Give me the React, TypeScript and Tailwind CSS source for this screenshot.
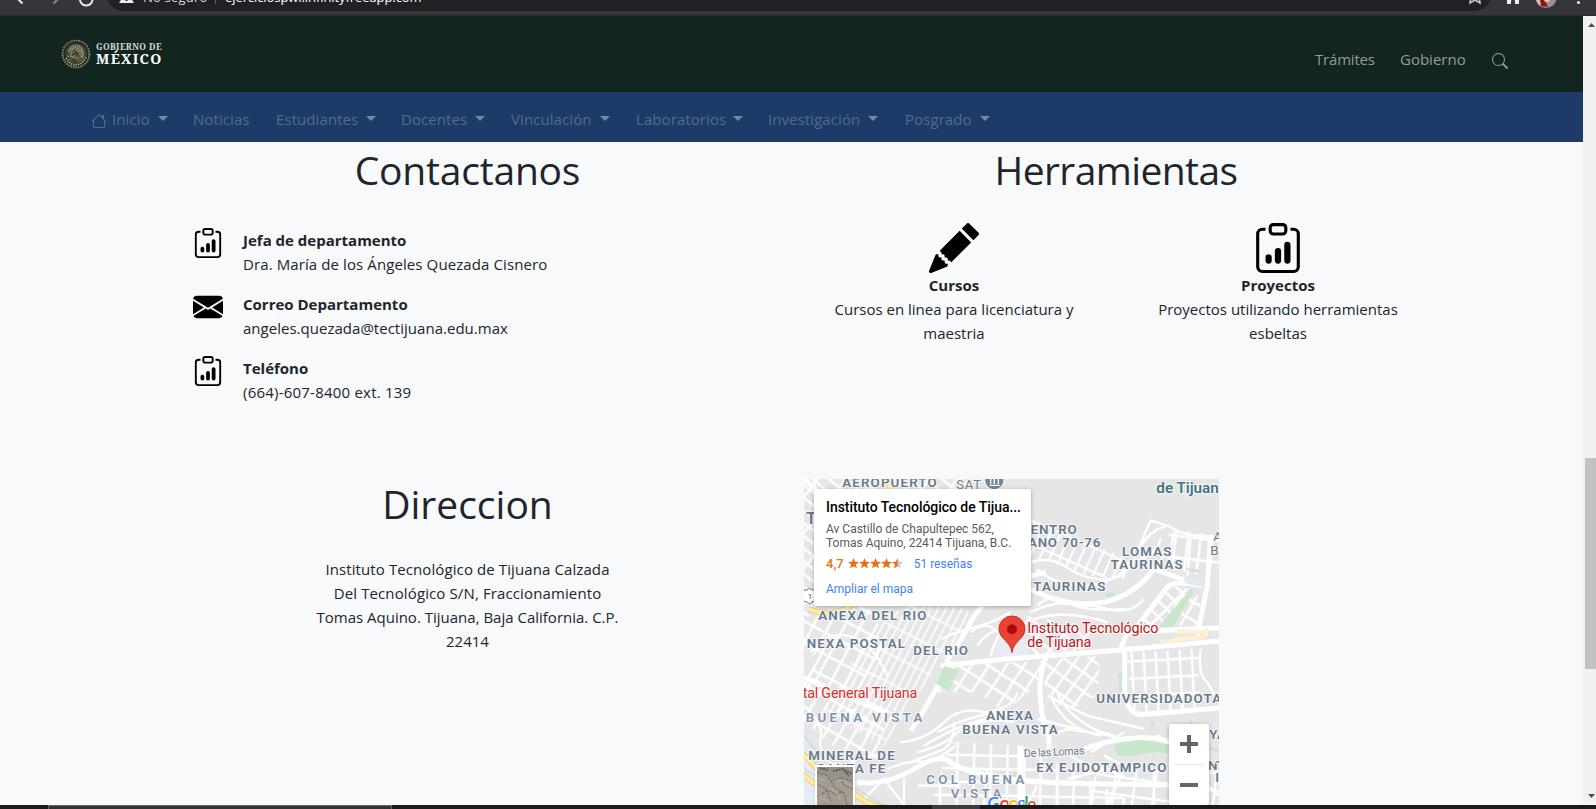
import React from "react";
import { BsClipboardData, BsEnvelopeFill, BsHouse, BsPencilFill, BsSearch } from "react-icons/bs";

function BrowserBar() {
  return (
    <div className="h-4 shrink-0 overflow-hidden border-b border-[#29292c] bg-[#35363a]">
      <div className="-mt-4 flex h-[27px] w-full items-stretch">
        <svg className="h-full w-[107px] shrink-0" viewBox="0 0 107 27" fill="none" strokeWidth="2">
          <path d="M16 13l6.500 6.500" stroke="#e8eaed" />
          <path d="M60 13l-6.500 6.500" stroke="#85868a" />
          <path d="M80.500 13a6.200 6.200 0 1 0 11.500 0" stroke="#e8eaed" />
        </svg>
        <div className="flex w-[1384px] shrink-0 rounded-b-[16px] bg-[#202124] text-[13px] leading-[16px]">
          <svg className="ml-3 h-full w-4 shrink-0" viewBox="0 0 16 27">
            <path d="M7.500 7L15 19H0Z" fill="#e8eaed" />
            <path d="M6.500 15.500h2v1.500h-2z" fill="#202124" />
          </svg>
          <span className="ml-[8px] w-[72px] shrink-0 pt-[5px] font-['Open_Sans',sans-serif] tracking-[0.2px] text-[#d5d8dc]">No seguro</span>
          <span className="mt-[14px] h-[6px] w-px bg-[#5f6368]" />
          <span className="ml-[9px] w-[1216px] shrink-0 pt-[5px] font-['Open_Sans',sans-serif] tracking-[-0.08px] text-white">ejerciciospwi.infinityfreeapp.com</span>
          <svg className="ml-[26px] h-full w-4 shrink-0" viewBox="0 0 16 27" fill="none" stroke="#c4c7ca" strokeWidth="1.600">
            <path d="M4 13l-1 6l5-3l5 3l-1-6" />
          </svg>
        </div>
        <svg className="h-full w-[105px] shrink-0" viewBox="0 0 105 27">
          <path d="M16 11h12v9h-4v-2.500a2 2 0 0 0-4 0V20h-4z" fill="#f1f3f4" />
          <circle cx="55" cy="13.500" r="10.500" fill="#9c8d98" />
          <path d="M45 16l4-1l3 7l-4-1z" fill="#d9b9a8" />
          <path d="M49 15l5 1l3 7l-7-1z" fill="#8f1420" />
          <path d="M51 12h9l-2 6h-4z" fill="#e6c09c" />
          <circle cx="87.500" cy="18.500" r="1.600" fill="#e8eaed" />
        </svg>
      </div>
    </div>
  );
}

function Seal() {
  return (
    <svg className="size-[30px]" viewBox="0 0 30 30" fill="none">
      <circle cx="15" cy="15" r="13.400" stroke="#8d8468" strokeWidth="1.900" strokeDasharray="1.600 0.900" />
      <circle cx="15" cy="15" r="11" fill="#3c4435" />
      <path d="M8 9c3-4 9-5 13-1c3 3 3 9 1 12l-4-2l1-4l-5-4l-3 3l-4 1z" fill="#6b6b55" />
      <path d="M7 12l5-5l4 2l6 6M10 15l6-4l5 8M6 17l7 1l6 5M9 21l5-5l7 6M17 6l4 5l1 8M12 9l-3 7l8 4" stroke="#a79d7c" strokeWidth="0.900" strokeDasharray="2 0.800" />
      <path d="M5 19c3 6 7 7 10 7.500M25 18c-2 5-5 7.500-10 8" stroke="#b3a985" strokeWidth="1.500" strokeDasharray="1.500 1" />
    </svg>
  );
}

function TopHeader() {
  return (
    <header className="flex h-[76px] shrink-0 items-start bg-[#13251f] pl-[61px]">
      <div className="flex grow items-center gap-[5px] pt-[23px]">
        <Seal />
        <div className="flex flex-col font-['Noto_Serif','Liberation_Serif',serif] font-bold text-white">
          <span className="text-[8.500px] leading-[9px] tracking-[0.380px] text-[#d8dcda]">GOBIERNO DE</span>
          <span className="text-[14px] leading-[15px] tracking-[1.300px]">MÉXICO</span>
        </div>
      </div>
      <div className="flex pt-[31px] text-[15px] leading-6 text-[#939d98]">
        <a className="w-[85px] tracking-[-0.2px]">Trámites</a>
        <a className="w-[92px]">Gobierno</a>
        <a className="w-[91px] pt-[6px]"><BsSearch className="size-4" /></a>
      </div>
    </header>
  );
}

const links = [
  { label: "Inicio", width: "w-[102px]", gap: "ml-2 tracking-normal", caret: true, home: true },
  { label: "Noticias", width: "w-[83px]", gap: "", caret: false },
  { label: "Estudiantes", width: "w-[125px]", gap: "ml-2", caret: true },
  { label: "Docentes", width: "w-[110px]", gap: "ml-2", caret: true },
  { label: "Vinculación", width: "w-[125px]", gap: "ml-2", caret: true },
  { label: "Laboratorios", width: "w-[132px]", gap: "ml-[7px]", caret: true },
  { label: "Investigación", width: "w-[137px]", gap: "ml-2", caret: true },
  { label: "Posgrado", width: "w-[100px]", gap: "ml-2", caret: true },
];

function NavBar() {
  return (
    <nav className="flex h-[50px] shrink-0 bg-[#1e3a69] pl-[91px] pt-[15px] text-[15px] leading-6 tracking-[0.08px] text-[#536a8f]">
      {links.map((l) => (
        <a key={l.label} className={"flex shrink-0 whitespace-nowrap " + l.width}>
          {l.home && <BsHouse className="mr-[5px] mt-[6px] size-4" />}
          {l.label}
          {l.caret && (
            <span className={"mt-[9px] size-0 border-x-[5px] border-t-[5px] border-x-transparent border-t-[#7488a6] " + l.gap} />
          )}
        </a>
      ))}
    </nav>
  );
}

function Contact({ icon, title, text, tracking }: { icon: React.ReactNode; title: string; text: string; tracking: string }) {
  return (
    <div className="flex h-16">
      <div className="w-[50px] text-[30px] text-black">{icon}</div>
      <div className="flex flex-col">
        <b>{title}</b>
        <span className={tracking}>{text}</span>
      </div>
    </div>
  );
}

function Tool({ icon, title, lines }: { icon: React.ReactNode; title: string; lines: string[] }) {
  return (
    <div className="flex w-1/2 flex-col items-center">
      <div className="text-[50px] text-black">{icon}</div>
      <b>{title}</b>
      {lines.map((t) => (
        <span key={t}>{t}</span>
      ))}
    </div>
  );
}

type Label = { t: string; x: number; y: number; w: number; s?: number; c?: string };
const labels: Label[] = [
  { t: "AEROPUERTO", x: 115, y: 25, w: 283 },
  { t: "ENTRO", x: 680, y: 164, w: 138 },
  { t: "ANO 70-76", x: 672, y: 203, w: 217 },
  { t: "LOMAS", x: 954, y: 230, w: 148 },
  { t: "TAURINAS", x: 920, y: 269, w: 216 },
  { t: "TAURINAS", x: 688, y: 335, w: 216 },
  { t: "ANEXA DEL RIO", x: 43, y: 422, w: 324 },
  { t: "NEXA POSTAL", x: 8, y: 506, w: 295 },
  { t: "DEL RIO", x: 328, y: 527, w: 164 },
  { t: "UNIVERSIDADOTAY", x: 877, y: 671, w: 400 },
  { t: "BUENA VISTA", x: 5, y: 729, w: 350, c: "#8092a8" },
  { t: "ANEXA", x: 547, y: 724, w: 140 },
  { t: "BUENA VISTA", x: 475, y: 764, w: 286 },
  { t: "MINERAL DE", x: 13, y: 842, w: 259 },
  { t: "SANTA FE", x: 38, y: 881, w: 206 },
  { t: "EX EJIDOTAMPICO", x: 697, y: 878, w: 390 },
  { t: "COL BUENA", x: 367, y: 914, w: 294, c: "#8092a8" },
  { t: "VISTA", x: 440, y: 957, w: 152, c: "#8092a8" },
  { t: "YA", x: 1216, y: 779, w: 50 },
  { t: "NT", x: 1212, y: 873, w: 48 },
  { t: "IN", x: 1234, y: 909, w: 48 },
  { t: "T", x: 6, y: 135, w: 26, s: 50 },
];

const districts = [
  { id: "a", w: 30, h: 66, a: -52, s: 7, p: "0,0 520,0 520,60 0,420" },
  { id: "b", w: 21, h: 78, a: 27, s: 5, p: "300,380 470,385 520,420 400,560 240,800 60,700 180,480" },
  { id: "c", w: 42, h: 58, a: 28, s: 7, p: "0,420 190,380 250,480 150,660 10,600 50,520 0,540" },
  { id: "d", w: 44, h: 48, a: 33, s: 7, p: "440,560 720,545 700,620 600,700 520,640 400,640" },
  { id: "e", w: 37, h: 46, a: 36, s: 7, p: "730,540 890,530 880,650 780,700 720,620" },
  { id: "f", w: 36, h: 52, a: -3, s: 7, p: "965,520 1180,510 1190,690 990,705" },
  { id: "g", w: 28, h: 66, a: 24, s: 6, p: "680,120 820,180 980,240 960,300 860,290 680,230" },
  { id: "h", w: 34, h: 110, a: -45, s: 7, p: "1000,440 1090,320 1165,330 1070,450" },
  { id: "i", w: 37, h: 65, a: 7, s: 7, p: "1100,150 1245,170 1245,300 1060,260" },
  { id: "j", w: 50, h: 40, a: 1, s: 7, p: "440,790 650,800 870,910 1000,978 380,978 420,850" },
  { id: "k", w: 38, h: 82, a: 30, s: 7, p: "0,600 240,740 220,840 110,820 0,730" },
  { id: "l", w: 32, h: 54, a: -48, s: 6, p: "660,410 860,440 850,510 670,530" },
  { id: "m", w: 60, h: 52, a: 8, s: 7, p: "880,870 1245,870 1245,978 850,978" },
  { id: "n", w: 42, h: 48, a: 30, s: 7, p: "1110,350 1190,350 1190,440 1110,440" },
];

function MapArt() {
  return (
    <svg className="block h-[326px] w-[415px]" viewBox="0 0 1245 978">
      <defs>
        {districts.map((d) => (
          <pattern key={d.id} id={"st-" + d.id} width={d.w} height={d.h} patternUnits="userSpaceOnUse" patternTransform={`rotate(${d.a})`}>
            <path d={`M${d.w / 2} 0V${d.h}M0 ${d.h / 2}H${d.w}`} stroke="#fff" strokeWidth={d.s} />
          </pattern>
        ))}
      </defs>
      <rect width="1245" height="978" fill="#e6e6e6" />
      {districts.map((d) => (
        <polygon key={d.id} points={d.p} fill={`url(#st-${d.id})`} />
      ))}
      <path d="M555 535l25-62l75-10l20 64z" fill="#e8ecf2" />
      <path d="M0 765l62 90l0 123H0z" fill="#e4ebf3" />
      <g fill="none" stroke="#fff" strokeLinejoin="round">
        <g strokeWidth="7">
          <path d="M680 250q60-20 110 16t120 36q60-8 80-60q20-50 50-118l60 20q40 30 130 28M1000 230q20-70 90-90M1010 240q50-20 60-60M700 270q40 40 120 50t160-60q40-50 70 20" />
          <path d="M680 400q90-50 230-10q70 20 110-30M690 420q100-30 220 10M700 380q40-40 90-10t180 20M500 460q50-40 80 0M410 480q70-30 120-40q60-20 90-40M520 500q20-30 60-50M560 530q10-40 30-70" />
          <path d="M290 790q80-10 130-60t120-30q90-10 100-60M340 820q80-20 120-60q80-50 170-30M360 800q130-80 260-95M400 760q110-60 210-60M250 870q70-30 120-20q50-20 85-50M320 850l100-40q30-20 30-80M760 640q20 60 110 110t200 20M740 650q40 100 150 120M710 760q40 10 80-10l130 20M800 830q40 30 110 40l60 30M790 900l120-30M900 830l100 50" />
          <path d="M20 520q40-60 110-50t120 120M0 620q50-90 60-110M0 680q60 50 50 100t50 80M130 860q50-40 100-30M180 960l60-60l60 78M540 978l10-110M300 900v78M340 920h130M870 750l200 70M960 760l-100 60M730 650l120 60l170 40M700 720l120 30" />
          <path d="M1190 510q-10 80 20 100l35 60M1110 160l-20 100M1160 180l-10 110M1180 890l65 60M660 830v148M700 920l-30 58M760 890v88M960 870l-50 108M1050 880v98" />
        </g>
        <g strokeWidth="15">
          <path d="M410 560L600 541L960 512L1245 486M425 550q50-70 80-130q70-110 220-140M962 512v110q0 80 50 85l233-20M950 510l20-50l275-14M990 455L1085 330q20-30 110-10M1220 170l-10 150l-30 150M680 330q110 60 220 40q90-20 150-100l110 40M730 525q-20 40-22 100q0 80 20 130q15 40 0 70" />
          <path d="M840 810q80-30 160-34t130 30M160 910q90 10 170-40t110-20q90 60 440 64l220 4M648 800v178M0 595l70 30M140 658l110 46M320 755q50-70 120-210M0 0l170 150" />
        </g>
        <path d="M0 820Q150 930 250 985M0 870q100 60 140 108M0 770q30 50 90 80" stroke="#d2d5d9" strokeWidth="4" />
      </g>
      <path d="M1140 292l62 16v18l-60-14z" fill="#e3e9ef" />
      <g fill="#c8e6c9">
        <path d="M421 562l41 12l-27 61l-39-20z" />
        <path d="M1160 330l10 6l-60 105l-46 2l40-47z" />
        <path d="M930 796l70-14l92 14l5 30l-45-8l-65 14l-46-2z" />
        <path d="M942 582h12v58h-8zM905 346l22-8l5 10l-20 8zM1145 267l42 6v8l-38-8zM1040 718l14 24h-12zM1158 718l10 22h-12zM1215 805l30 8v6l-30-6zM626 884l12-4l-2 14h-12z" />
      </g>
      <path d="M1118 450l88 4v12l-88-2zM1068 482l46-4v14l-46-2zM1110 474l92-6v12l-90 8zM1200 448h12v26h-12z" fill="#fcf1d3" />
      <g fill="none">
        <path d="M-5 825L40 868M-5 885L50 930M150 944q50 40 100 42M15 390q80 30 140-20M240-5l30 50" stroke="#f3cf70" strokeWidth="17" />
        <path d="M-5 825L40 868M-5 885L50 930M150 944q50 40 100 42M15 390q80 30 140-20M240-5l30 50" stroke="#ffeba8" strokeWidth="11" />
      </g>
      <path d="M-4 332q10 6 20-4q8 8 16 4v34q-10 0-14 10q-8-10-22-10z" fill="#fff" stroke="#777" strokeWidth="3" />
      <g fontFamily="Roboto, sans-serif" paintOrder="stroke" stroke="#f6f7f8" strokeWidth="6" strokeLinejoin="round">
        {labels.map((l, i) => (
          <text key={i} x={l.x} y={l.y} textLength={l.w} fontSize={l.s ?? 40} fontWeight="600" fill={l.c ?? "#66778b"}>{l.t}</text>
        ))}
        <g fontSize="43">
          <text x="457" y="31" textLength="74" fontSize="39" fill="#707b87">SAT</text>
          <text x="1057" y="42" textLength="212" fontSize="46" fontWeight="600" fill="#3f7583">de Tijuana</text>
          <text x="1228" y="185" fontSize="40" fill="#777">A</text>
          <text x="1219" y="227" fontSize="40" fill="#777">B</text>
          <text x="670" y="462" textLength="393" fill="#b8181c">Instituto Tecnológico</text>
          <text x="670" y="504" textLength="192" fill="#b8181c">de Tijuana</text>
          <text x="-4" y="657" textLength="344" fill="#d93025">tal General Tijuana</text>
          <text x="660" y="835" textLength="182" fontSize="33" fill="#66788a" transform="rotate(-3 660 835)">De las Lomas</text>
          <text x="11" y="361" fontSize="24" strokeWidth="0" fill="#555">1</text>
        </g>
      </g>
      <circle cx="571" cy="3" r="29" fill="#6f8796" stroke="#fff" strokeWidth="3" />
      <path d="M557 19h30M560-4v19M571-4v19M583-4v19" stroke="#fff" strokeWidth="4" />
      <path d="M624 521C620 486 585 480 585 450a39 39 0 0 1 78 0C663 480 628 486 624 521z" fill="#ea4335" stroke="#c5352b" strokeWidth="3" />
      <circle cx="624" cy="451" r="15" fill="#a50e0e" />
      <g fontFamily="Open Sans, sans-serif" fontSize="54" fontWeight="600" stroke="#fff" strokeWidth="6" paintOrder="stroke">
        <text x="549" y="993" fill="#4285f4">G</text>
        <text x="586" y="993" fill="#ea4335">o</text>
        <text x="613" y="993" fill="#fbbc05">o</text>
        <text x="639" y="993" fill="#4285f4">g</text>
        <text x="660" y="993" fill="#34a853">l</text>
        <text x="670" y="993" fill="#ea4335" fontSize="48">e</text>
      </g>
    </svg>
  );
}

function StarRow() {
  const star = "M6.500 0L8.300 4.300L13 4.600L9.400 7.600L10.600 12L6.500 9.600L2.400 12L3.600 7.600L0 4.600L4.700 4.300Z";
  return (
    <svg className="ml-1 mt-[2px] h-3 w-[55px]" viewBox="0 0 65 14">
      {[0, 1, 2, 3].map((n) => (
        <path key={n} d={star} transform={`translate(${n * 13} 0)`} fill="#e7711b" />
      ))}
      <path d={star} transform="translate(52 0)" fill="#c9cbce" />
      <path d="M58.500 0V9.600L54.400 12L55.600 7.600L52 4.600L56.700 4.300Z" fill="#e7711b" />
    </svg>
  );
}

function MapPanel() {
  return (
    <div className="relative h-[326px] w-[415px] overflow-hidden font-['Roboto',sans-serif]">
      <MapArt />
      <div className="absolute left-[10px] top-[10px] h-[117px] w-[217px] rounded-[2px] bg-white pl-3 pt-[10px] shadow-[0_1px_4px_rgba(0,0,0,0.3)]">
        <div className="whitespace-nowrap text-[14px] font-medium leading-4 tracking-[-0.05px] text-black">Instituto Tecnológico de Tijua...</div>
        <div className="mt-[7px] whitespace-nowrap text-[12px] leading-[14px] text-[#5b5b5b]">
          Av Castillo de Chapultepec 562,<br />Tomas Aquino, 22414 Tijuana, B.C.
        </div>
        <div className="mt-[6px] flex h-4 leading-4">
          <span className="text-[13px] font-medium text-[#e7711b]">4,7</span>
          <StarRow />
          <span className="ml-[11px] text-[12px] text-[#427fed]">51 reseñas</span>
        </div>
        <div className="mt-[9px] text-[12px] leading-4 text-[#427fed]">Ampliar el mapa</div>
      </div>
      <div className="absolute left-[11px] top-[286px] h-[60px] w-[40px] border-2 border-white bg-[#99928a] shadow">
        <svg className="size-full" viewBox="0 0 36 56" preserveAspectRatio="none" fill="none">
          <path d="M0 12l8-5l6 5l9-3l13 8v39H0z" fill="#a49c92" />
          <path d="M0 5l9 3l5 6l9-3l13 3M2 18l7 4l5 12M14 14l4 7l9 5l3 12M24 10l3 8l9 4M5 27l6-4l8 5l7-4" stroke="#7b756d" strokeWidth="1.300" strokeDasharray="3 1" />
          <path d="M2 11l6 3M12 22l7 2l4 8M19 14l7-1l8 7M3 31l8 3" stroke="#b9b1a5" strokeWidth="1.500" strokeDasharray="2 1" />
          <path d="M3 1l8 2M16 4l10-2l9 5M27 4l5 5" stroke="#555c4b" strokeWidth="2" strokeDasharray="2 1" />
        </svg>
      </div>
      <div className="absolute left-[365px] top-[245px] flex h-[81px] w-10 flex-col items-center rounded-[2px] bg-white shadow-[0_1px_4px_rgba(0,0,0,0.3)]">
        <svg className="h-[81px] w-10" viewBox="0 0 40 81">
          <path d="M11 18h7v-7h4v7h7v4h-7v7h-4v-7h-7zM11 59h18v4H11z" fill="#666" />
          <path d="M5 40.500h30" stroke="#e6e6e6" />
        </svg>
      </div>
    </div>
  );
}

function Content() {
  return (
    <main className="flex grow flex-col overflow-hidden pl-[143px] text-[15px] leading-6 text-[#212529]">
      <div className="flex h-[337px] shrink-0">
        <section className="w-[649px] pt-[4px]">
          <h1 className="text-center text-[39px] font-medium leading-[48px] tracking-[-0.2px]">Contactanos</h1>
          <div className="pl-[50px] pt-[34px]">
            <Contact icon={<BsClipboardData />} title="Jefa de departamento" text="Dra. María de los Ángeles Quezada Cisnero" tracking="tracking-[0.1px]" />
            <Contact icon={<BsEnvelopeFill />} title="Correo Departamento" text="angeles.quezada@tectijuana.edu.max" tracking="tracking-[0.02px]" />
            <Contact icon={<BsClipboardData />} title="Teléfono" text="(664)-607-8400 ext. 139" tracking="tracking-[0.22px]" />
          </div>
        </section>
        <section className="w-[648px] pt-[4px]">
          <h1 className="text-center text-[39px] font-medium leading-[48px] tracking-[-0.6px]">Herramientas</h1>
          <div className="flex pt-[29px]">
            <Tool icon={<BsPencilFill />} title="Cursos" lines={["Cursos en linea para licenciatura y", "maestria"]} />
            <Tool icon={<BsClipboardData />} title="Proyectos" lines={["Proyectos utilizando herramientas", "esbeltas"]} />
          </div>
        </section>
      </div>
      <div className="flex grow">
        <section className="w-[649px] text-center">
          <h1 className="pt-[1px] text-[39px] font-medium leading-[48px]">Direccion</h1>
          <p className="pt-[29px]">
            <span className="tracking-[0.1px]">Instituto Tecnológico de Tijuana Calzada</span><br />
            <span className="tracking-[0.12px]">Del Tecnológico S/N, Fraccionamiento</span><br />
            Tomas Aquino. Tijuana, Baja California. C.P.<br />22414
          </p>
        </section>
        <section className="pl-3">
          <MapPanel />
        </section>
      </div>
    </main>
  );
}

function ScrollBar() {
  return (
    <div className="flex w-[13px] shrink-0 flex-col items-end bg-[#f1f1f1]">
      <svg className="h-[442px] w-[13px]" viewBox="0 0 13 442"><path d="M5 11l3.500-4l3.500 4z" fill="#505050" /></svg>
      <div className="h-[211px] w-[11px] bg-[#c1c1c1]" />
      <svg className="h-[136px] w-[13px]" viewBox="0 0 13 136"><path d="M5 125l3.500 4l3.500-4z" fill="#505050" /></svg>
    </div>
  );
}

export default function App() {
  return (
    <div className="flex h-[809px] w-[1596px] flex-col overflow-hidden bg-[#f8f9fb] font-['Open_Sans','Noto_Sans',sans-serif]">
      <BrowserBar />
      <div className="flex h-[789px] shrink-0">
        <div className="flex w-[1583px] shrink-0 flex-col">
          <TopHeader />
          <NavBar />
          <Content />
        </div>
        <ScrollBar />
      </div>
      <div className="flex h-1 shrink-0 bg-[#1b1b1b]">
        <div className="ml-12 h-full w-[344px] border-x border-t border-[#666] bg-[#333]" />
        <div className="ml-[540px] h-full w-12 bg-[#3c3c3c]" />
      </div>
    </div>
  );
}
